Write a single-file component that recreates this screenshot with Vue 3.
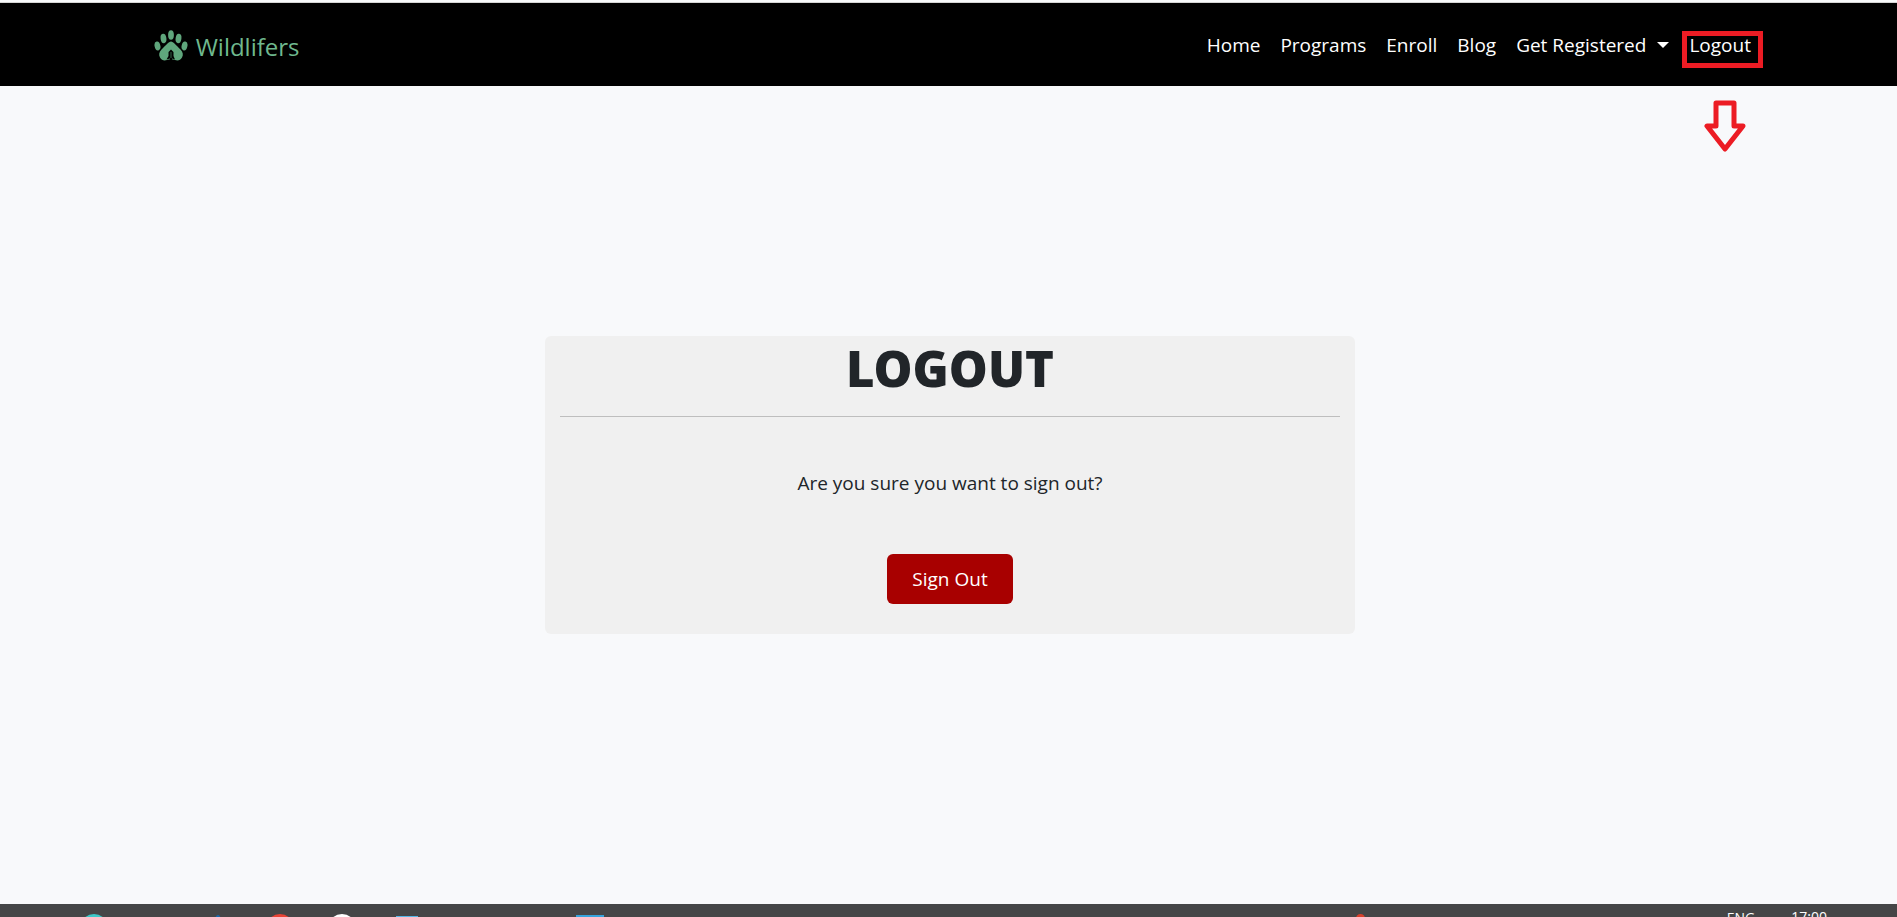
<script setup>
const links = ['Home', 'Programs', 'Enroll', 'Blog']
const apps = ['cyan', 'none', 'blue', 'red', 'white', 'window', 'none', 'none', 'mail']
</script>

<template>
  <div class="screen">
    <header class="navbar">
      <a href="#" class="brand">
        <svg class="paw" viewBox="0 0 34 32" aria-hidden="true">
          <g fill="#5fa67c">
            <ellipse cx="3.5" cy="16" rx="2.900" ry="4.5" transform="rotate(-12 3.5 16)" />
            <ellipse cx="9.5" cy="8.5" rx="2.9" ry="4.7" transform="rotate(-8 9.5 8.5)" />
            <ellipse cx="17" cy="5" rx="2.9" ry="4.7" />
            <ellipse cx="24.5" cy="8.5" rx="2.9" ry="4.7" transform="rotate(8 24.5 8.5)" />
            <ellipse cx="30.5" cy="16" rx="2.900" ry="4.5" transform="rotate(12 30.5 16)" />
            <path d="M17 11.500C15 11.500 11 16 7.500 19.500C5 22 4.500 25 6 27.500C7.500 30.500 10.500 31 13 30Q17 28.500 21 30C23.500 31 26.500 30.500 28 27.500C29.500 25 29 22 26.500 19.500C23 16 19 11.500 17 11.500Z" />
          </g>
          <path d="M17 19.500L14.500 22V26L12.500 29.500L16 28.500V31H18V28.500L21 29.500L19.500 26V22Z" fill="#000" />
          <path d="M17 22V28" stroke="#356348" stroke-width="1" />
        </svg>
        <span class="name">Wildlifers</span>
      </a>
      <nav class="links">
        <a v-for="link in links" :key="link" href="#">{{ link }}</a>
        <a href="#" class="dropdown">Get Registered<span class="caret"></span></a>
        <a href="#" class="logout">Logout
          <span class="marker"></span>
          <svg class="arrow" viewBox="0 0 42 53" aria-hidden="true">
            <path d="M12 3H30V26H39L21 49L3 26H12Z" fill="none" stroke="#ec1c24" stroke-width="5" stroke-linejoin="round" />
          </svg>
        </a>
      </nav>
    </header>

    <main>
      <section class="card">
        <h1>LOGOUT</h1>
        <hr />
        <form @submit.prevent>
          <p>Are you sure you want to sign out?</p>
          <button type="submit">Sign Out</button>
        </form>
      </section>
    </main>

    <footer class="taskbar">
      <span v-for="(app, i) in apps" :key="i" class="slot"><i :class="app"></i></span>
      <div class="tray">
        <i class="alert"></i>
        <span class="lang">ENG</span>
        <time>17:00</time>
      </div>
    </footer>
  </div>
</template>

<style>
body {
  margin: 0;
}
</style>

<style scoped>
.screen {
  display: flex;
  flex-direction: column;
  box-sizing: border-box;
  height: 100vh;
  overflow: hidden;
  padding-top: 2px;
  background: #f8f9fb;
  color: #212529;
  font-family: "Open Sans", "Noto Sans", sans-serif;
  font-size: 19px;
}
.navbar {
  display: flex;
  align-items: center;
  justify-content: space-between;
  box-sizing: border-box;
  min-height: 84px;
  padding: 0 7.7% 0 8.1%;
  border-top: 1px solid #d4d4d4;
  background: #000;
}
.brand {
  display: flex;
  align-items: center;
  gap: 8px;
  padding-top: 2px;
  color: #6fb98e;
  font-size: 24px;
  text-decoration: none;
}
.name {
  padding-top: 2px;
}
.paw {
  width: 34px;
  height: 32px;
}
.links {
  display: flex;
  gap: 20px;
}
.links a {
  color: #fff;
  text-decoration: none;
  line-height: 28px;
}
.dropdown {
  display: flex;
  align-items: center;
  gap: 11px;
}
.caret {
  border: 6px solid transparent;
  border-top-color: #fff;
  border-bottom: 0;
}
.logout {
  position: relative;
}
.marker {
  position: absolute;
  inset: 0 -12px -9px -7px;
  border: 5px solid #ec1c24;
}
.arrow {
  position: absolute;
  top: 69px;
  left: 15px;
  width: 42px;
  height: 53px;
}
main {
  display: flex;
  flex: 1;
  align-items: center;
  justify-content: center;
  padding: 0 0 21px 3px;
}
.card {
  box-sizing: border-box;
  width: 42.8%;
  padding: 0 15px 30px;
  border-radius: 6px;
  background: #f0f0f0;
  text-align: center;
}
h1 {
  margin: 0;
  font-family: "Noto Sans", "Open Sans", sans-serif;
  font-size: 49px;
  font-weight: 900;
  line-height: 64px;
}
hr {
  margin: 16px 0 50px;
  border: 0;
  border-top: 1px solid #bebebe;
}
p {
  margin: 0 0 54px;
  line-height: 33px;
}
button {
  display: block;
  height: 50px;
  margin: 0 auto;
  padding: 0 25px;
  border: 0;
  border-radius: 6px;
  background: #a80000;
  color: #fff;
  font: inherit;
}
.taskbar {
  display: flex;
  align-items: flex-start;
  box-sizing: border-box;
  height: 13px;
  overflow: hidden;
  padding-left: 63px;
  background: #454647;
}
.slot {
  display: flex;
  justify-content: center;
  width: 62px;
  padding-top: 10px;
}
.slot i {
  flex: none;
  width: 28px;
  height: 28px;
  border-radius: 50%;
}
.slot .cyan {
  background: #3cc8c8;
}
.slot .blue {
  width: 8px;
  height: 20px;
  margin-top: 1px;
  background: #1769ad;
}
.slot .red {
  background: #e94335;
}
.slot .white {
  background: #fff;
}
.slot .window {
  width: 22px;
  margin: 2px 0 0 6px;
  border-radius: 0;
  background: #55b7e8;
}
.slot .mail {
  margin-top: 1px;
  border-radius: 0;
  background: #35a3dc;
}
.tray {
  display: flex;
  margin-left: auto;
  padding: 4px 70px 0 0;
  color: #fff;
  font-size: 14px;
  line-height: 20px;
}
.alert {
  width: 9px;
  height: 9px;
  margin: 6px 362px 0 0;
  border-radius: 50%;
  background: #d8402b;
}
.lang {
  margin-right: 36px;
}
time {
  margin-top: -1px;
}
</style>
